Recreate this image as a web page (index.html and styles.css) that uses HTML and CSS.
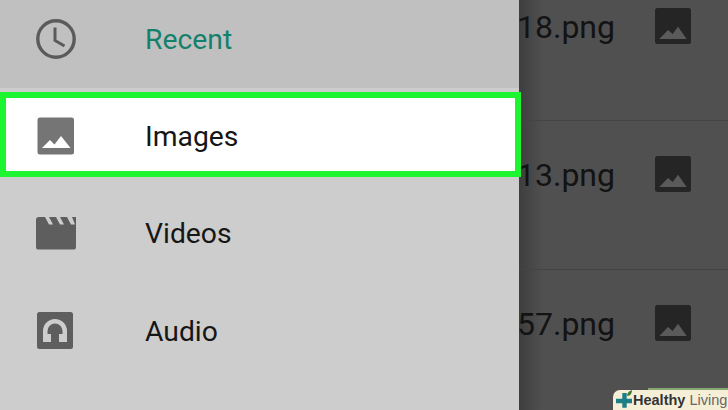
FILE: index.html
```html
<!DOCTYPE html>
<html>
<head>
	<title>Images</title>
	<link rel="stylesheet" href="styles.css">
</head>
<body>
	<div id="screen">
		<ul id="drawer">
			<li class="nav-item nav-recent">
				<svg class="nav-icon" viewBox="0 0 40 40" width="40" height="40">
					<circle cx="20" cy="20" r="18.2" fill="none" stroke="#5b5b5b" stroke-width="3.4"/>
					<path d="M19 8.500V21.500L28.500 27" fill="none" stroke="#5b5b5b" stroke-width="3"/>
				</svg>
				<span>Recent</span>
			</li>
			<li class="nav-item nav-active">
				<svg class="nav-icon" viewBox="0 0 40 40" width="40" height="40">
					<rect x="1.500" y="1.500" width="36.500" height="37" rx="2.500" fill="#757575"/>
					<path d="M6 32L14 24L18.500 28.500L25 20L34.500 32Z" fill="#fff"/>
				</svg>
				<span>Images</span>
			</li>
			<li class="nav-item nav-videos">
				<svg class="nav-icon" viewBox="0 0 40 40" width="40" height="40">
					<path d="M0 6Q0 3 3 3H9L13 10.500H17L13 3H20L24 10.500H28L24 3H31L35 10.500H39L36 3H40V33Q40 35.500 38 35.500H2Q0 35.500 0 33Z" fill="#5e5e5e"/>
				</svg>
				<span>Videos</span>
			</li>
			<li class="nav-item nav-audio">
				<svg class="nav-icon" viewBox="0 0 40 40" width="40" height="40">
					<rect x="1" y="1" width="36" height="37" rx="2.500" fill="#5e5e5e"/>
					<path d="M7 31V20A12 12 0 0 1 31 20V31H23V23H26.500V20A7.500 7.500 0 0 0 11.500 20V23H15V31Z" fill="#cdcdcd"/>
				</svg>
				<span>Audio</span>
			</li>
		</ul>
		<div id="files">
			<div class="file-row">
				<span class="file-name">18.png</span>
				<svg class="file-icon" viewBox="0 0 36 36" width="36" height="36">
					<rect width="36" height="36" rx="2.500" fill="#252525"/>
					<path d="M4.300 31L13 22L17.700 26L23 18.700L31.700 31Z" fill="#5a5a5a"/>
				</svg>
			</div>
			<div class="file-row">
				<span class="file-name">13.png</span>
				<svg class="file-icon" viewBox="0 0 36 36" width="36" height="36">
					<rect width="36" height="36" rx="2.500" fill="#252525"/>
					<path d="M4.300 31L13 22L17.700 26L23 18.700L31.700 31Z" fill="#5a5a5a"/>
				</svg>
			</div>
			<div class="file-row">
				<span class="file-name">57.png</span>
				<svg class="file-icon" viewBox="0 0 36 36" width="36" height="36">
					<rect width="36" height="36" rx="2.500" fill="#252525"/>
					<path d="M4.300 31L13 22L17.700 26L23 18.700L31.700 31Z" fill="#5a5a5a"/>
				</svg>
			</div>
		</div>
		<div id="badge-back"></div>
		<div id="badge">
			<svg class="badge-icon" viewBox="0 0 20 20" width="20" height="20">
				<path d="M8.300 3H12.700V8.700H18V13.300H12.700V17.700H8.300V13.300H2V8.700H8.300Z" fill="#1d7f86"/>
				<path d="M13 6C13 3 15 1 18 0C18 3 16.500 6 13 6Z" fill="#3f7a35"/>
			</svg>
			<span class="badge-strong">Healthy</span>
			<span class="badge-light">Living</span>
		</div>
	</div>
</body>
</html>
```

FILE: styles.css
```css
html, body {
	margin: 0;
	padding: 0;
}

#screen {
	position: relative;
	display: flex;
	width: 728px;
	height: 410px;
	overflow: hidden;
	font-family: Roboto, sans-serif;
}

#drawer {
	flex: 0 0 519px;
	width: 519px;
	margin: 0;
	padding: 0;
	list-style-type: none;
	background-color: #cdcdcd;
	z-index: 1;
}

.nav-item {
	display: flex;
	align-items: center;
	gap: 69px;
	box-sizing: border-box;
	height: 97.5px;
	padding-left: 36px;
	font-size: 28.3px;
	color: #161616;
}

.nav-icon {
	flex: none;
}

.nav-recent {
	height: 88px;
	margin-bottom: 4px;
	padding-bottom: 10px;
	background-color: #c0c0c0;
	color: #15806c;
}

.nav-active {
	width: 521px;
	height: 85px;
	padding-left: 30px;
	padding-top: 3px;
	margin-bottom: 8px;
	border: 6px solid #1cf52f;
	background-color: #fff;
}

#files {
	flex: 1;
	min-width: 0;
	margin-top: -27px;
	background: linear-gradient(to right, #3e3e3e, #505050 24px);
}

.file-row {
	display: flex;
	justify-content: flex-end;
	align-items: flex-start;
	gap: 40px;
	box-sizing: border-box;
	height: 148.4px;
	padding: 35px 37px 0 0;
	border-bottom: 1px solid #444;
}

.file-name {
	margin-top: 1px;
	font-size: 32px;
	line-height: 36px;
	color: #131313;
	white-space: nowrap;
}

.file-icon {
	flex: none;
}

#badge-back {
	position: absolute;
	right: 0;
	bottom: 0;
	width: 80px;
	height: 22px;
	background-color: #86a873;
}

#badge {
	position: absolute;
	right: 0;
	bottom: 0;
	display: flex;
	align-items: center;
	gap: 4px;
	box-sizing: border-box;
	width: 115px;
	height: 20px;
	padding-left: 1px;
	border-top-left-radius: 7px;
	background-color: #f6efd8;
	font-family: "Liberation Sans", sans-serif;
	font-size: 14.5px;
}

.badge-icon {
	flex: none;
	margin-right: -5px;
}

.badge-strong {
	font-weight: bold;
	color: #333;
}

.badge-light {
	color: #666;
}
```
